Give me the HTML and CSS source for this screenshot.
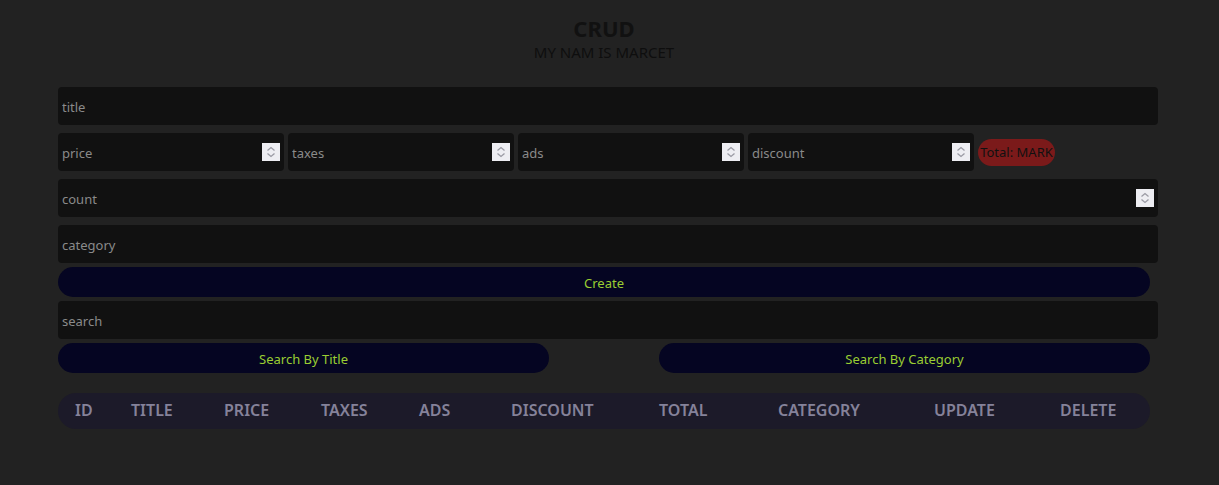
FILE: index.html
```html
<!DOCTYPE html>
<html>
<head>
<meta charset="utf-8">
<link rel="stylesheet" href="styles.css">
</head>
<body>
<div class="crud">
  <div class="head">
    <h2 class="title">CRUD</h2>
    <p class="subtitle">MY NAM IS MARCET</p>
  </div>
  <div class="inputs">
    <input class="field" type="text" placeholder="title">
    <div class="price-row">
      <div class="num-wrap small">
        <input class="field num" type="number" placeholder="price">
        <span class="spin"><svg width="18" height="18" viewBox="0 0 18 18"><path d="M5.5 7.5 9 4.5 12.5 7.5M5.5 10.5 9 13.5 12.5 10.5" fill="none" stroke="#9a9aa4" stroke-width="1.3"/></svg></span>
      </div>
      <div class="num-wrap small">
        <input class="field num" type="number" placeholder="taxes">
        <span class="spin"><svg width="18" height="18" viewBox="0 0 18 18"><path d="M5.5 7.5 9 4.5 12.5 7.5M5.5 10.5 9 13.5 12.5 10.5" fill="none" stroke="#9a9aa4" stroke-width="1.3"/></svg></span>
      </div>
      <div class="num-wrap small">
        <input class="field num" type="number" placeholder="ads">
        <span class="spin"><svg width="18" height="18" viewBox="0 0 18 18"><path d="M5.5 7.5 9 4.5 12.5 7.5M5.5 10.5 9 13.5 12.5 10.5" fill="none" stroke="#9a9aa4" stroke-width="1.3"/></svg></span>
      </div>
      <div class="num-wrap small">
        <input class="field num" type="number" placeholder="discount">
        <span class="spin"><svg width="18" height="18" viewBox="0 0 18 18"><path d="M5.5 7.5 9 4.5 12.5 7.5M5.5 10.5 9 13.5 12.5 10.5" fill="none" stroke="#9a9aa4" stroke-width="1.3"/></svg></span>
      </div>
      <span class="total">Total: MARK</span>
    </div>
    <div class="num-wrap wide">
      <input class="field" type="number" placeholder="count">
      <span class="spin"><svg width="18" height="18" viewBox="0 0 18 18"><path d="M5.5 7.5 9 4.5 12.5 7.5M5.5 10.5 9 13.5 12.5 10.5" fill="none" stroke="#9a9aa4" stroke-width="1.3"/></svg></span>
    </div>
    <input class="field" type="text" placeholder="category">
    <button class="btn create">Create</button>
  </div>
  <div class="search-box">
    <input class="field" type="text" placeholder="search">
    <div class="btn-row">
      <button class="btn half">Search By Title</button>
      <button class="btn half">Search By Category</button>
    </div>
  </div>
  <div class="table">
    <span class="th c-id">ID</span>
    <span class="th c-title">TITLE</span>
    <span class="th c-price">PRICE</span>
    <span class="th c-taxes">TAXES</span>
    <span class="th c-ads">ADS</span>
    <span class="th c-disc">DISCOUNT</span>
    <span class="th c-total">TOTAL</span>
    <span class="th c-cat">CATEGORY</span>
    <span class="th c-upd">UPDATE</span>
    <span class="th c-del">DELETE</span>
  </div>
</div>
</body>
</html>
```

FILE: styles.css
```css
html, body {
  margin: 0;
  padding: 0;
  background: #222222;
  font-family: "Noto Sans", "Open Sans", sans-serif;
}
.crud {
  width: 1092px;
  margin-left: 58px;
}
.head {
  text-align: center;
  color: #111111;
  padding-top: 14px;
}
.title {
  margin: 0;
  font-size: 22px;
  font-weight: 700;
  line-height: 28px;
}
.subtitle {
  margin: 0;
  font-size: 15px;
  line-height: 20px;
  color: #0e0e0e;
}
.inputs {
  margin-top: 25px;
  display: flex;
  flex-direction: column;
  gap: 8px;
}
.field {
  box-sizing: border-box;
  width: 1100px;
  height: 38px;
  background: #111111;
  border: none;
  outline: none;
  border-radius: 4px;
  padding: 2px 4px 0;
  color: #ddd;
  font-family: "Noto Sans", "Open Sans", sans-serif;
  font-size: 13px;
  -moz-appearance: textfield;
}
.field::-webkit-outer-spin-button,
.field::-webkit-inner-spin-button {
  -webkit-appearance: none;
  margin: 0;
}
.field::placeholder {
  color: #8a8a8a;
}
.num-wrap {
  position: relative;
  display: flex;
}
.num-wrap.small {
  width: 226px;
}
.num-wrap.wide {
  width: 1100px;
}
.spin {
  position: absolute;
  right: 4px;
  top: 10px;
  width: 18px;
  height: 18px;
  background: #ededf2;
  display: flex;
}
.price-row {
  display: flex;
  align-items: center;
  gap: 4px;
}
.price-row .num {
  width: 226px;
}
.total {
  background: #7b1a1a;
  color: #111;
  border-radius: 14px;
  height: 27px;
  line-height: 27px;
  padding: 0 2px;
  font-size: 13px;
  width: 73px;
  text-align: center;
}
.btn {
  box-sizing: border-box;
  height: 30px;
  border: none;
  border-radius: 15px;
  background: #050522;
  color: #9acd32;
  font-family: "Noto Sans", "Open Sans", sans-serif;
  font-size: 13px;
  padding-top: 2px;
  cursor: pointer;
}
.create {
  width: 1092px;
  margin-top: -4px;
}
.search-box {
  margin-top: 4px;
  display: flex;
  flex-direction: column;
  gap: 4px;
}
.btn-row {
  display: flex;
  justify-content: space-between;
}
.half {
  width: 491px;
}
.table {
  position: relative;
  margin-top: 20px;
  height: 36px;
  border-radius: 18px;
  background: #1c1a29;
}
.th {
  position: absolute;
  top: 0;
  line-height: 35px;
  font-size: 16px;
  font-weight: 600;
  color: #85829a;
}
.c-id { left: 17px; }
.c-title { left: 73px; }
.c-price { left: 166px; }
.c-taxes { left: 263px; }
.c-ads { left: 361px; }
.c-disc { left: 453px; }
.c-total { left: 601px; }
.c-cat { left: 720px; }
.c-upd { left: 876px; }
.c-del { left: 1002px; }
```
